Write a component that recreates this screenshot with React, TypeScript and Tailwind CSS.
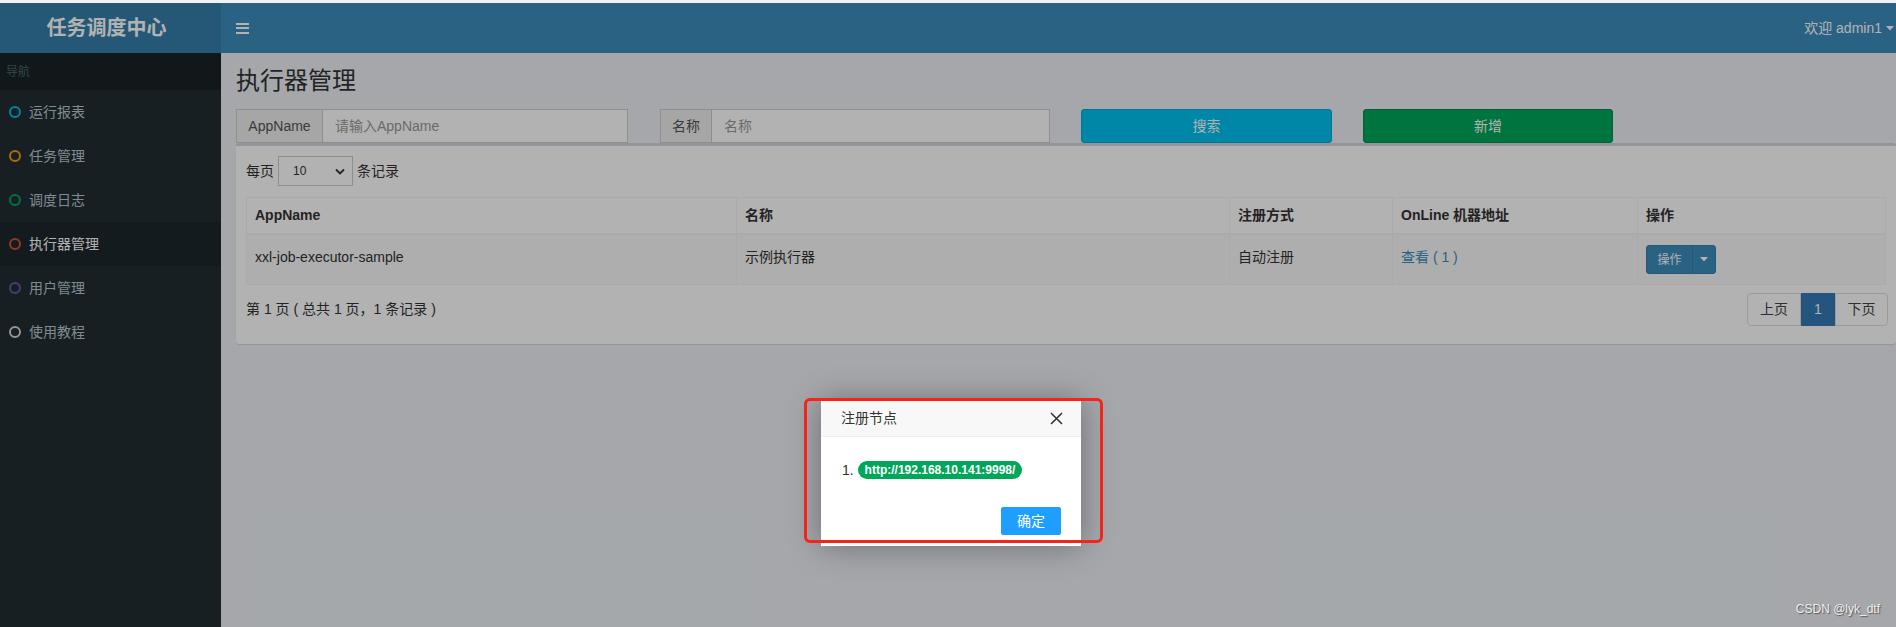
import React from "react";

const menu = [
  { t: "运行报表", c: "border-[#00c0ef]", active: false },
  { t: "任务管理", c: "border-[#f39c12]", active: false },
  { t: "调度日志", c: "border-[#00a65a]", active: false },
  { t: "执行器管理", c: "border-[#dd4b39]", active: true },
  { t: "用户管理", c: "border-[#605ca8]", active: false },
  { t: "使用教程", c: "border-[#d2d6de]", active: false },
];

function Caret({ color = "#fff" }: { color?: string }) {
  return (
    <svg width="8" height="5" viewBox="0 0 8 5">
      <path d="M0 0 L8 0 L4 4.5 Z" fill={color} />
    </svg>
  );
}

export default function App() {
  return (
    <div className="relative w-[1896px] h-[627px] overflow-hidden bg-[#ecf0f5] font-[family-name:'Liberation_Sans','Noto_Sans_CJK_SC',sans-serif] text-[14px] text-[#333]">
      <div className="h-[3px] bg-[#f2f2f2]" />
      <div className="relative h-[624px] flex flex-col">
        {/* Header */}
        <header className="flex h-[50px] shrink-0">
          <div className="w-[221px] bg-[#367fa9] flex items-center justify-center pr-[8px] text-white text-[20px] font-bold">
            任务调度中心
          </div>
          <div className="flex-1 bg-[#3c8dbc] flex items-center justify-between pl-[15px] pr-[2px]">
            <div className="flex flex-col gap-[2.5px] w-[13px]">
              <span className="block h-[2px] bg-white" />
              <span className="block h-[2px] bg-white" />
              <span className="block h-[2px] bg-white" />
            </div>
            <div className="flex items-center gap-[4px] text-white">
              <span>欢迎 admin1</span>
              <Caret />
            </div>
          </div>
        </header>

        <div className="flex flex-1 min-h-0">
          {/* Sidebar */}
          <aside className="w-[221px] shrink-0 bg-[#222d32]">
            <div className="h-[37px] bg-[#1a2226] text-[#4b646f] text-[12px] flex items-center pl-[6px]">
              导航
            </div>
            {menu.map((m) => (
              <div
                key={m.t}
                className={
                  m.active
                    ? "h-[44px] flex items-center pl-[9px] gap-[8px] bg-[#1e282c] text-white"
                    : "h-[44px] flex items-center pl-[9px] gap-[8px] text-[#b8c7ce]"
                }
              >
                <span className={"block w-[12px] h-[12px] rounded-full border-[2px] " + m.c} />
                <span>{m.t}</span>
              </div>
            ))}
          </aside>

          {/* Content */}
          <main className="flex-1 pl-[15px] pr-[2px]">
            <div className="h-[56px] flex items-center text-[24px] leading-none text-[#333]">执行器管理</div>

            <div className="flex h-[34px]">
              <div className="flex w-[392px]">
                <div className="w-[87px] flex items-center justify-center bg-[#eee] border border-[#ccc] text-[#555]">
                  AppName
                </div>
                <div className="flex-1 flex items-center pl-[12px] bg-white border-y border-r border-[#ccc] text-[#999]">
                  请输入AppName
                </div>
              </div>
              <div className="flex w-[390px] ml-[32px]">
                <div className="w-[52px] flex items-center justify-center bg-[#eee] border border-[#ccc] text-[#555]">
                  名称
                </div>
                <div className="flex-1 flex items-center pl-[12px] bg-white border-y border-r border-[#ccc] text-[#999]">
                  名称
                </div>
              </div>
              <div className="w-[251px] ml-[31px] flex items-center justify-center bg-[#00c0ef] border border-[#00acd6] rounded-[3px] text-white">
                搜索
              </div>
              <div className="w-[250px] ml-[31px] flex items-center justify-center bg-[#00a65a] border border-[#008d4c] rounded-[3px] text-white">
                新增
              </div>
            </div>

            <div className="bg-white border-t-[3px] border-[#d2d6de] rounded-[3px] shadow-[0_1px_1px_rgba(0,0,0,0.1)] px-[10px] pt-[10px] pb-[18px]">
              <div className="flex items-center h-[30px]">
                <span>每页</span>
                <div className="ml-[4px] w-[75px] h-[30px] border border-[#ccc] bg-white flex items-center justify-between pl-[14px] pr-[7px] text-[12px]">
                  <span>10</span>
                  <svg width="10" height="7" viewBox="0 0 10 7">
                    <path d="M1 1.5 L5 5.5 L9 1.5" fill="none" stroke="#333" strokeWidth="1.8" />
                  </svg>
                </div>
                <span className="ml-[4px]">条记录</span>
              </div>

              <div className="mt-[11px] border border-[#f4f4f4]">
                <div className="grid grid-cols-[490px_493px_163px_245px_247px] h-[37px] border-b-2 border-[#f4f4f4] font-bold divide-x divide-[#f4f4f4]">
                  <div className="flex items-center pl-[8px]">AppName</div>
                  <div className="flex items-center pl-[8px]">名称</div>
                  <div className="flex items-center pl-[8px]">注册方式</div>
                  <div className="flex items-center pl-[8px]">OnLine 机器地址</div>
                  <div className="flex items-center pl-[8px]">操作</div>
                </div>
                <div className="grid grid-cols-[490px_493px_163px_245px_247px] h-[49px] bg-[#f9f9f9] divide-x divide-[#f4f4f4] leading-[20px]">
                  <div className="pl-[8px] pt-[12px]">xxl-job-executor-sample</div>
                  <div className="pl-[8px] pt-[12px]">示例执行器</div>
                  <div className="pl-[8px] pt-[12px]">自动注册</div>
                  <div className="pl-[8px] pt-[12px] text-[#3c8dbc]">查看 ( 1 )</div>
                  <div className="pl-[8px] pt-[10px]">
                    <div className="inline-flex h-[29px] rounded-[3px] bg-[#3c8dbc] border border-[#367fa9] text-white text-[12px]">
                      <div className="w-[45px] flex items-center justify-center">操作</div>
                      <div className="w-[23px] flex items-center justify-center border-l border-[#367fa9]">
                        <Caret />
                      </div>
                    </div>
                  </div>
                </div>
              </div>

              <div className="mt-[8px] h-[33px] flex items-center justify-between">
                <div>第 1 页 ( 总共 1 页，1 条记录 )</div>
                <div className="flex h-[33px] mr-[-2px]">
                  <div className="w-[54px] flex items-center justify-center border border-[#ddd] rounded-l-[4px] text-[#444]">上页</div>
                  <div className="w-[34px] flex items-center justify-center bg-[#337ab7] border border-[#337ab7] text-white">1</div>
                  <div className="w-[53px] flex items-center justify-center border border-[#ddd] rounded-r-[4px] text-[#444]">下页</div>
                </div>
              </div>
            </div>
          </main>
        </div>

        {/* Shade */}
        <div className="absolute inset-0 bg-[rgba(0,0,0,0.3)]" />
      </div>

      {/* Modal */}
      <div className="absolute left-[821px] top-[401px] w-[260px] h-[145px] bg-white shadow-[0_0_30px_rgba(0,0,0,0.35)]">
        <div className="h-[36px] bg-[#f8f8f8] border-b border-[#eee] flex items-center justify-between pl-[20px] pr-[18px] text-[#333]">
          <span>注册节点</span>
          <svg width="13" height="13" viewBox="0 0 13 13">
            <path d="M1 1 L12 12 M12 1 L1 12" stroke="#333" strokeWidth="1.6" />
          </svg>
        </div>
        <div className="pl-[21px] pt-[24px] h-[70px]">
          <div className="flex items-center h-[18px] text-[#333]">
            <span>1.&nbsp;</span>
            <span className="inline-flex items-center h-[18px] px-[7px] rounded-[10px] bg-[#00a65a] text-white text-[12px] font-bold leading-none">
              http://192.168.10.141:9998/
            </span>
          </div>
        </div>
        <div className="flex justify-end pr-[20px]">
          <div className="h-[28px] w-[60px] flex items-center justify-center rounded-[2px] bg-[#1e9fff] border border-[#1e9fff] text-white">
            确定
          </div>
        </div>
      </div>

      {/* Annotation */}
      <div className="absolute left-[804px] top-[398px] w-[299px] h-[145px] border-[3px] border-[#f5241b] rounded-[6px]" />

      {/* Watermark */}
      <div className="absolute right-[16px] bottom-[9px] text-[12px] text-[#eeeeee] [text-shadow:1px_1px_1px_rgba(0,0,0,0.5)]">
        CSDN @lyk_dtf
      </div>
    </div>
  );
}
